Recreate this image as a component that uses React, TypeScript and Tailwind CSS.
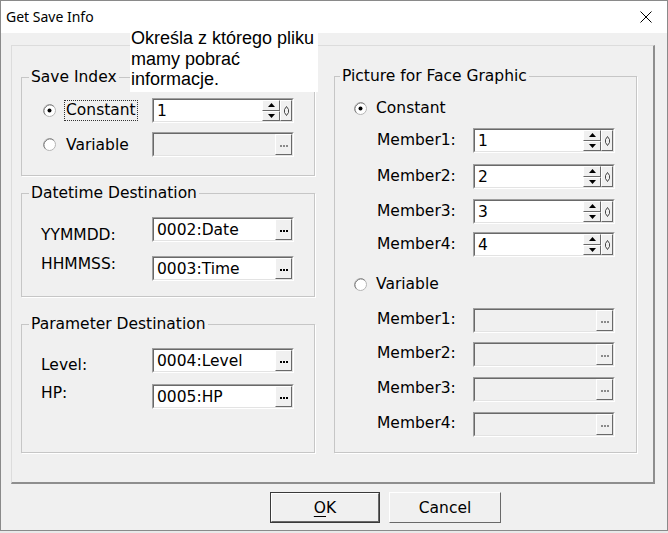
import type { ReactNode } from 'react';

const ui = "font-['DejaVu_Sans',sans-serif] text-[15.5px] leading-[20px] text-black";

function Radio({ checked }: { checked?: boolean }) {
  return (
    <svg width="13" height="13" viewBox="0 0 13 13" className="shrink-0">
      <circle cx="6.5" cy="6.5" r="6" fill="#fff" stroke="#b4b4b4" />
      <path d="M2.3 10.7 A6 6 0 0 1 10.7 2.3" fill="none" stroke="#7a7a7a" />
      {checked && <circle cx="6.5" cy="6.5" r="2" fill="#000" />}
    </svg>
  );
}

// classic sunken edit box
function Sunken({ children, disabled }: { children: ReactNode; disabled?: boolean }) {
  return (
    <div className="w-[142px] h-[25px] shrink-0 border border-t-[#a0a0a0] border-l-[#a0a0a0] border-b-white border-r-white">
      <div
        className={`h-full flex border border-t-[#696969] border-l-[#696969] border-b-[#e3e3e3] border-r-[#e3e3e3] ${
          disabled ? 'bg-[#f0f0f0]' : 'bg-white'
        }`}
      >
        {children}
      </div>
    </div>
  );
}

const raised =
  'bg-[#f0f0f0] border border-t-white border-l-white border-b-[#696969] border-r-[#696969]';

function Spin({ value }: { value: string }) {
  return (
    <Sunken>
      <span className="flex-1 pl-[3px] pt-[2px] leading-[19px]">{value}</span>
      <div className="w-[18px] flex flex-col">
        <div className={`flex-1 flex items-center justify-center ${raised}`}>
          <svg width="7" height="4" viewBox="0 0 7 4">
            <path d="M3.5 0 L7 4 L0 4 Z" fill="#000" />
          </svg>
        </div>
        <div className={`flex-1 flex items-center justify-center ${raised}`}>
          <svg width="7" height="4" viewBox="0 0 7 4">
            <path d="M0 0 L7 0 L3.5 4 Z" fill="#000" />
          </svg>
        </div>
      </div>
      <div className={`w-[12px] flex items-center justify-center ${raised}`}>
        <svg width="5" height="10" viewBox="0 0 5 10">
          <path d="M2.5 0.5 L4.5 3.5 L4.5 6.5 L2.5 9.5 L0.5 6.5 L0.5 3.5 Z" fill="none" stroke="#333" strokeWidth="0.9" />
        </svg>
      </div>
    </Sunken>
  );
}

function Pick({ value, disabled }: { value?: string; disabled?: boolean }) {
  return (
    <Sunken disabled={disabled}>
      <span className="flex-1 pl-[3px] pt-[2px] leading-[19px]">{value}</span>
      <div className={`w-[17px] flex items-center justify-center pt-[3px] ${raised}`}>
        <svg width="8" height="2" viewBox="0 0 8 2">
          <rect x="0" y="0" width="2" height="2" fill={disabled ? '#8a8a8a' : '#000'} />
          <rect x="3" y="0" width="2" height="2" fill={disabled ? '#8a8a8a' : '#000'} />
          <rect x="6" y="0" width="2" height="2" fill={disabled ? '#8a8a8a' : '#000'} />
        </svg>
      </div>
    </Sunken>
  );
}

function Group({
  title,
  className,
  legend = 'ml-[7px]',
  children,
}: {
  title: string;
  className: string;
  legend?: string;
  children: ReactNode;
}) {
  return (
    <div className={`flex flex-col border border-[#c6c6c6] shadow-[1px_1px_0_#fff] ${className}`}>
      <span className={`self-start -mt-[10px] ${legend} px-[2px] leading-[18px] bg-[#f0f0f0]`}>{title}</span>
      {children}
    </div>
  );
}

export default function App() {
  return (
    <div className={`w-[668px] h-[533px] bg-[#e9e9e9] ${ui}`}>
      <div className="relative w-[668px] h-[531px] border border-[#8a8a8a] bg-[#f0f0f0] flex flex-col">
        {/* title bar */}
        <div className="h-[32px] bg-white flex items-center justify-between pl-[5px] pr-[15px] font-['Noto_Sans',sans-serif] text-[14px]">
          <span>Get Save Info</span>
          <svg width="12" height="12" viewBox="0 0 12 12">
            <path d="M0.5 0.5 L11.5 11.5 M11.5 0.5 L0.5 11.5" stroke="#000" strokeWidth="1" />
          </svg>
        </div>

        {/* tooltip */}
        <div className="absolute left-[129px] top-[27px] w-[188px] h-[64px] bg-white font-['Liberation_Sans',Arial,sans-serif] text-[18px] leading-[20.5px] pl-[1px]">
          Określa z którego pliku
          <br />
          mamy pobrać
          <br />
          informacje.
        </div>

        {/* main panel */}
        <div className="ml-[10px] mt-[12px] w-[644px] h-[439px] flex border-t border-l border-t-[#dcdcdc] border-l-[#dcdcdc] border-r-2 border-b-2 border-r-[#8e8e8e] border-b-[#8e8e8e]">
          <div className="ml-[9px] pt-[31px] w-[294px] flex flex-col">
            <Group title="Save Index" className="h-[99px]">
              <div className="mt-[12px] flex items-center">
                <div className="w-[130px] pl-[21px] flex items-center">
                  <Radio checked />
                  <span className="ml-[8px] px-[1px] border border-dotted border-[#333] leading-[19px]">Constant</span>
                </div>
                <Spin value="1" />
              </div>
              <div className="mt-[9px] flex items-center">
                <div className="w-[130px] pl-[21px] flex items-center">
                  <Radio />
                  <span className="ml-[9px] pl-[1px]">Variable</span>
                </div>
                <Pick disabled />
              </div>
            </Group>

            <Group title="Datetime Destination" className="mt-[17px] h-[104px]">
              <div className="mt-[15px] flex items-start">
                <span className="w-[130px] pl-[19px] pt-[8px]">YYMMDD:</span>
                <Pick value="0002:Date" />
              </div>
              <div className="mt-[11px] flex items-start">
                <span className="w-[130px] pl-[19px] -mt-[2px]">HHMMSS:</span>
                <Pick value="0003:Time" />
              </div>
            </Group>

            <Group title="Parameter Destination" className="mt-[27px] h-[129px]">
              <div className="mt-[15px] flex items-start">
                <span className="w-[130px] pl-[19px] pt-[7px]">Level:</span>
                <Pick value="0004:Level" />
              </div>
              <div className="mt-[9px] flex items-start">
                <span className="w-[130px] pl-[19px] -mt-[1px]">HP:</span>
                <Pick value="0005:HP" />
              </div>
            </Group>
          </div>

          <div className="ml-[19px] pt-[30px] w-[303px]">
            <Group title="Picture for Face Graphic" className="h-[377px]" legend="ml-[5px]">
              <div className="mt-[13px] pl-[19px] flex items-center">
                <Radio checked />
                <span className="ml-[9px]">Constant</span>
              </div>
              {[
                ['Member1:', '1', 'mt-[10px]'],
                ['Member2:', '2', 'mt-[11px]'],
                ['Member3:', '3', 'mt-[10px]'],
                ['Member4:', '4', 'mt-[8px]'],
              ].map(([label, v, m]) => (
                <div key={label} className={`${m} flex items-center`}>
                  <span className="w-[138px] pl-[42px] -mt-[1px]">{label}</span>
                  <Spin value={v} />
                </div>
              ))}
              <div className="mt-[17px] pl-[19px] flex items-center">
                <Radio />
                <span className="ml-[9px]">Variable</span>
              </div>
              {[
                ['Member1:', 'mt-[14px]'],
                ['Member2:', 'mt-[9px]'],
                ['Member3:', 'mt-[10px]'],
                ['Member4:', 'mt-[10px]'],
              ].map(([label, m]) => (
                <div key={label} className={`${m} flex items-center`}>
                  <span className="w-[138px] pl-[42px] -mt-[3px]">{label}</span>
                  <Pick disabled />
                </div>
              ))}
            </Group>
          </div>
        </div>

        {/* buttons */}
        <div className="mt-[8px] pl-[269px] flex gap-[9px]">
          <div className="w-[110px] h-[31px] border border-[#3a3a3a]">
            <div className={`h-full flex items-center justify-center ${raised}`}>
              <span>
                <span className="underline underline-offset-[3px]">O</span>K
              </span>
            </div>
          </div>
          <div className={`w-[112px] h-[31px] flex items-center justify-center ${raised}`}>Cancel</div>
        </div>
      </div>
    </div>
  );
}
